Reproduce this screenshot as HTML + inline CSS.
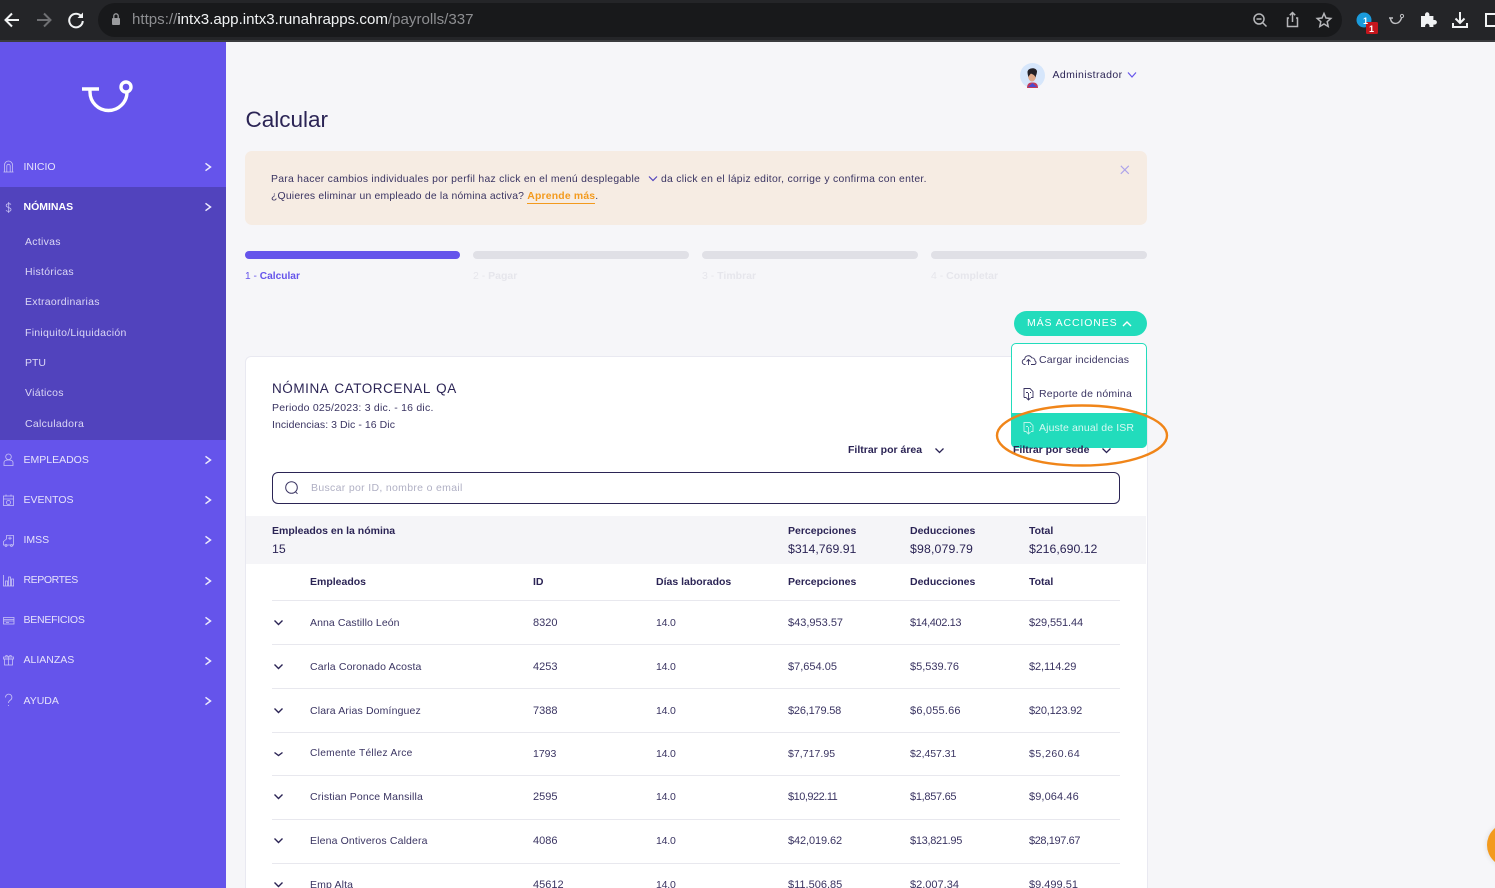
<!DOCTYPE html>
<html lang="es"><head><meta charset="utf-8"><title>Calcular</title>
<style>
html,body{margin:0;padding:0;width:1495px;height:888px;overflow:hidden;background:#f6f6f9;font-family:"Liberation Sans",sans-serif;color:#2b2455}
#r{position:absolute;left:0;top:0;width:1495px;height:888px;overflow:hidden;background:#f6f6f9}
.a{position:absolute}
.t{position:absolute;white-space:nowrap;line-height:14px;font-size:11px;color:#3a3462;margin-top:1px}
.z{margin-top:0}
.n{color:#e6e3fb;font-size:10.5px}
.s{color:#dcd8f6;font-size:10.5px;letter-spacing:.28px}
.b{font-weight:bold;color:#2b2455;font-size:10.5px}
.m{font-size:12.300px;color:#2b2455}
.c{font-size:10.500px;letter-spacing:.14px}
.d{font-size:10.500px;letter-spacing:-.2px}
.l{position:absolute;left:272px;width:848px;height:1px;background:#e8e8ee}
svg{position:absolute;overflow:visible}
</style></head><body><div id="r">

<!-- browser bar -->
<div class="a" style="left:0;top:0;width:1495px;height:41px;background:#242528"></div>
<div class="a" style="left:0;top:40px;width:1495px;height:2px;background:#3a3b3e"></div>
<div class="a" style="left:98px;top:3px;width:1244px;height:34px;border-radius:17px;background:#18191b"></div>
<svg style="left:0;top:0" width="1495" height="41" fill="none" stroke-width="2">
<path d="M19 20H6M12 13.500L5.500 20 12 26.500" stroke="#f1f3f4"/>
<path d="M37 20h13M44 13.500l6.500 6.500-6.500 6.500" stroke="#6f7073"/>
<path d="M81.500 16.500A6.800 6.800 0 1 0 82.800 21" stroke="#f1f3f4"/><path d="M83 12.500v5.500h-5.500z" fill="#f1f3f4"/>
<rect x="112" y="18" width="8" height="7" rx="1" fill="#9a9b9e"/><path d="M113.800 18v-2a2.200 2.200 0 0 1 4.400 0v2" stroke="#9a9b9e" stroke-width="1.300"/>
<g stroke="#b6b7ba" stroke-width="1.500"><circle cx="1259" cy="19" r="5"/><path d="M1263 23l3.500 3.500M1256.500 19h5"/>
<path d="M1289 18h-1.500v8.500h10V18H1296M1292.500 22v-9M1289.800 15.200l2.700-2.700 2.700 2.700"/>
<path d="M1324 13.500l2 4.500 4.800.500-3.600 3.200 1 4.800-4.200-2.500-4.200 2.500 1-4.800-3.600-3.200 4.800-.500z"/></g>
<circle cx="1364" cy="20" r="7.500" fill="#1a9bdc"/><rect x="1366" y="22" width="12" height="12" rx="1.500" fill="#c5161d"/>
<path d="M1389 18l4 0M1390.500 18c0 7 9 7.500 11 0" stroke="#bfc0c3" stroke-width="1.400"/><circle cx="1402" cy="16" r="1.600" stroke="#bfc0c3" stroke-width="1"/>
<path d="M1421 16h4v-1.500a2.200 2.200 0 0 1 4.400 0V16h4v4h1.200a2.300 2.300 0 0 1 0 4.600H1433.400V27H1429.500v-1a2.200 2.200 0 0 0-4.400 0v1H1421z" fill="#f1f3f4"/>
<path d="M1460 12v11M1455.500 18.500l4.500 4.500 4.500-4.500M1453 23v4h14v-4" stroke="#f1f3f4"/>
<rect x="1486" y="14" width="12" height="12" stroke="#f1f3f4"/>
</svg>
<div class="t z" style="left:132px;top:12px;line-height:16px;font-size:15.100px;color:#f1f3f4"><span style="color:#8d8e91">https://</span>intx3.app.intx3.runahrapps.com<span style="color:#8d8e91">/payrolls/337</span></div>
<div class="t z" style="left:1363px;top:14px;font-size:9px;font-weight:bold;color:#fff">1</div>
<div class="t z" style="left:1369px;top:22px;font-size:9px;font-weight:bold;color:#fff">1</div>

<!-- sidebar -->
<div class="a" style="left:0;top:42px;width:226px;height:846px;background:#6554eb"></div>
<div class="a" style="left:0;top:187px;width:226px;height:253px;background:#5143bd"></div>
<svg style="left:0;top:42px" width="226" height="846" fill="none" stroke="#fff">
<path d="M82 47h17M90 47v3a18.500 18.500 0 0 0 37 0" stroke-width="3.400"/><circle cx="126" cy="45" r="5" stroke-width="3.400"/>
<g stroke="#c9c3f5" stroke-width=".8">
<path d="M3.500 130h10M4.500 130v-7a4 4 0 0 1 8 0v7M6.800 130v-6a1.700 1.700 0 0 1 3.400 0v6"/>
<path d="M11 162.500c-.8-1.200-4.800-1.200-4.800 1 0 2.500 4.800 1.500 4.800 4 0 2.300-4 2.300-5 .8M8.700 160v11"/>
<circle cx="8.500" cy="414.800" r="2.800"/><path d="M4 423.500v-3c0-2 2-2.500 4.500-2.500s4.500.5 4.500 2.500v3z"/>
<rect x="3.500" y="454" width="10" height="9.500"/><path d="M3.500 457h10M6 452.500v2M11 452.500v2"/><circle cx="8.500" cy="460.500" r="2"/>
<path d="M3.500 503v-3.500l3-2.500v-3.500h7V503zM10 494.500v3.500M8.200 496.200h3.600"/><circle cx="6" cy="503.500" r="1"/><circle cx="11.500" cy="503.500" r="1"/>
<path d="M3.500 533v11h10.500M5.500 544v-5h2v5zM8.500 544v-9h2v9zM11.500 544v-7h2v7z"/>
<rect x="3.500" y="575.500" width="10.500" height="6.500"/><path d="M3.500 577.500h10.500M3.500 579h10.500M6 580.500h3"/>
<rect x="4.500" y="617" width="8" height="6"/><path d="M3.500 615h10v2h-10zM8.500 615v8M8.500 615c-2-3-4-1-2 0M8.500 615c2-3 4-1 2 0"/>
<path d="M5.500 655.500a3.200 3.200 0 1 1 5 2.500c-1.500 1-2 1.500-2 3M8.500 663v1"/>
</g>
<g stroke="#eceafd" stroke-width="1.500">
<path d="M205.500 121.300l5 3.700-5 3.700M205.500 161.300l5 3.700-5 3.700M205.500 414.300l5 3.700-5 3.700M205.500 454.300l5 3.700-5 3.700M205.500 494.300l5 3.700-5 3.700M205.500 535.300l5 3.700-5 3.700M205.500 575.300l5 3.700-5 3.700M205.500 615.300l5 3.700-5 3.700M205.500 655.300l5 3.700-5 3.700"/>
</g></svg>
<div class="t n" style="left:23.500px;top:159px">INICIO</div>
<div class="t n" style="left:23.500px;top:199px;font-weight:bold;color:#fff">NÓMINAS</div>
<div class="t s" style="left:25px;top:234px">Activas</div>
<div class="t s" style="left:25px;top:264px">Históricas</div>
<div class="t s" style="left:25px;top:294px">Extraordinarias</div>
<div class="t s" style="left:25px;top:325px">Finiquito/Liquidación</div>
<div class="t s" style="left:25px;top:355px;letter-spacing:0">PTU</div>
<div class="t s" style="left:25px;top:385px">Viáticos</div>
<div class="t s" style="left:25px;top:416px">Calculadora</div>
<div class="t n" style="left:23.500px;top:452px">EMPLEADOS</div>
<div class="t n" style="left:23.500px;top:492px">EVENTOS</div>
<div class="t n" style="left:23.500px;top:532px">IMSS</div>
<div class="t n" style="left:23.500px;top:572px;letter-spacing:-.4px">REPORTES</div>
<div class="t n" style="left:23.500px;top:612px;letter-spacing:-.25px">BENEFICIOS</div>
<div class="t n" style="left:23.500px;top:652px">ALIANZAS</div>
<div class="t n" style="left:23.500px;top:693px">AYUDA</div>

<!-- header -->
<svg style="left:1020px;top:63px" width="26" height="26"><circle cx="12.500" cy="12.500" r="12.500" fill="#d6e6fb"/><path d="M7 25c0-5 3-5.500 5.500-5.500s5.500.500 5.500 5.500z" fill="#c23a5a"/><path d="M8 24l4.500-4 4.500 4z" fill="#4a4ad0"/><ellipse cx="12" cy="12.500" rx="4" ry="6" fill="#dfa98a"/><path d="M7.500 9c0-4 8-5.500 9.500-1 0 3-1 4-1.500 6.500-1-3-3-3-4.500-4-1 1-2 2-2.500 3.500-.500-1.500-1-3-1-5z" fill="#232027"/></svg>
<div class="t" style="left:1052.500px;top:67px;font-size:10.500px;letter-spacing:.4px;color:#2b2455">Administrador</div>
<svg style="left:1127px;top:71px" width="10" height="8" fill="none"><path d="M1 1.500l4 4.500 4-4.500" stroke="#6554eb" stroke-width="1.200"/></svg>
<div class="t z" style="left:245.500px;top:106px;line-height:28px;font-size:22.500px;color:#2b2455">Calcular</div>

<!-- banner -->
<div class="a" style="left:245px;top:151px;width:902px;height:74px;border-radius:7px;background:#f6ece3"></div>
<div class="t" style="left:271px;top:172px;font-size:10.400px;letter-spacing:.27px">Para hacer cambios individuales por perfil haz click en el menú desplegable</div>
<svg style="left:648px;top:175px" width="10" height="8" fill="none"><path d="M1 1.500l4 4 4-4" stroke="#5143bd" stroke-width="1.200"/></svg>
<div class="t" style="left:661px;top:172px;font-size:10.400px;letter-spacing:.28px">da click en el lápiz editor, corrige y confirma con enter.</div>
<div class="t" style="left:271px;top:189px;font-size:10.400px;letter-spacing:.2px">¿Quieres eliminar un empleado de la nómina activa? <span style="color:#f39a1d;font-weight:bold;border-bottom:1px solid #f39a1d;padding-bottom:1px;letter-spacing:.2px">Aprende más</span>.</div>
<svg style="left:1120px;top:165px" width="10" height="10" fill="none"><path d="M.8.800l8 8M8.800.800l-8 8" stroke="#ada3ea" stroke-width="1.100"/></svg>

<!-- stepper -->
<div class="a" style="left:245px;top:251px;width:215px;height:8px;border-radius:4px;background:#6554eb"></div>
<div class="a" style="left:473px;top:251px;width:216px;height:8px;border-radius:4px;background:#e0e0e6"></div>
<div class="a" style="left:702px;top:251px;width:216px;height:8px;border-radius:4px;background:#e0e0e6"></div>
<div class="a" style="left:931px;top:251px;width:216px;height:8px;border-radius:4px;background:#e0e0e6"></div>
<div class="t" style="left:245px;top:269px;font-size:10.200px;color:#6554eb">1 - <b>Calcular</b></div>
<div class="t" style="left:473px;top:268px;font-size:10.500px;color:#e6e6ec">2 - <b>Pagar</b></div>
<div class="t" style="left:702px;top:268px;font-size:10.500px;color:#e6e6ec">3 - <b>Timbrar</b></div>
<div class="t" style="left:931px;top:268px;font-size:10.500px;color:#e6e6ec">4 - <b>Completar</b></div>

<!-- card -->
<div class="a" style="left:245px;top:356px;width:901px;height:560px;background:#fff;border:1px solid #e9e9f1;border-radius:6px"></div>
<div class="t" style="left:272px;top:381px;font-size:13.500px;letter-spacing:.55px;color:#2b2455;word-spacing:1.500px">NÓMINA CATORCENAL QA</div>
<div class="t" style="left:272px;top:400px;font-size:10.500px;letter-spacing:.22px">Periodo 025/2023: 3 dic. - 16 dic.</div>
<div class="t" style="left:272px;top:417px;font-size:10.500px;letter-spacing:.06px">Incidencias: 3 Dic - 16 Dic</div>
<div class="t b" style="left:848px;top:442px">Filtrar por área</div>
<svg style="left:934px;top:447px" width="11" height="8" fill="none"><path d="M1.500 1.500l4 4 4-4" stroke="#2b2455" stroke-width="1.300"/></svg>
<div class="a" style="left:272px;top:472px;width:846px;height:30px;border:1.300px solid #2b2455;border-radius:6px;background:#fff"></div>
<svg style="left:284px;top:480px" width="16" height="16" fill="none" stroke="#3a3462" stroke-width="1"><circle cx="7.500" cy="7.500" r="5.800"/><path d="M11.500 11.800l2 2"/></svg>
<div class="t" style="left:311px;top:480px;font-size:10.500px;letter-spacing:.32px;color:#b0b0c4">Buscar por ID, nombre o email</div>

<div class="a" style="left:246px;top:516px;width:900px;height:48px;background:#f5f5f8"></div>
<div class="t b" style="left:272px;top:523px">Empleados en la nómina</div><div class="t m" style="left:272px;top:541px">15</div>
<div class="t b" style="left:788px;top:523px">Percepciones</div><div class="t m" style="left:788px;top:541px">$314,769.91</div>
<div class="t b" style="left:910px;top:523px">Deducciones</div><div class="t m" style="left:910px;top:541px;letter-spacing:.15px">$98,079.79</div>
<div class="t b" style="left:1029px;top:523px">Total</div><div class="t m" style="left:1029px;top:541px">$216,690.12</div>

<div class="t b" style="left:310px;top:574px">Empleados</div>
<div class="t b" style="left:533px;top:574px">ID</div>
<div class="t b" style="left:656px;top:574px">Días laborados</div>
<div class="t b" style="left:788px;top:574px">Percepciones</div>
<div class="t b" style="left:910px;top:574px">Deducciones</div>
<div class="t b" style="left:1029px;top:574px">Total</div>
<div class="l" style="top:600px"></div><div class="l" style="top:644px"></div><div class="l" style="top:688px"></div><div class="l" style="top:732px"></div><div class="l" style="top:775px"></div><div class="l" style="top:819px"></div><div class="l" style="top:863px"></div>

<svg style="left:273px;top:601px" width="12" height="288" fill="none" stroke="#2b2455" stroke-width="1.400">
<path d="M1.500 19.500l4 4 4-4M1.500 63.500l4 4 4-4M1.500 107.500l4 4 4-4M1.500 151.500l4 3 4-3M1.500 193.500l4 4 4-4M1.500 237.500l4 4 4-4M1.500 281.500l4 4 4-4"/></svg>

<div class="t c" style="left:310px;top:615px;letter-spacing:.08px">Anna Castillo León</div><div class="t" style="left:533px;top:615px">8320</div><div class="t d" style="left:656px;top:615px">14.0</div><div class="t" style="left:788px;top:615px">$43,953.57</div><div class="t" style="left:910px;top:615px;letter-spacing:-.4px">$14,402.13</div><div class="t" style="left:1029px;top:615px;letter-spacing:-.1px">$29,551.44</div>
<div class="t c" style="left:310px;top:659px">Carla Coronado Acosta</div><div class="t" style="left:533px;top:659px">4253</div><div class="t d" style="left:656px;top:659px">14.0</div><div class="t" style="left:788px;top:659px">$7,654.05</div><div class="t" style="left:910px;top:659px">$5,539.76</div><div class="t" style="left:1029px;top:659px;letter-spacing:-.1px">$2,114.29</div>
<div class="t c" style="left:310px;top:703px">Clara Arias Domínguez</div><div class="t" style="left:533px;top:703px">7388</div><div class="t d" style="left:656px;top:703px">14.0</div><div class="t" style="left:788px;top:703px;letter-spacing:-.2px">$26,179.58</div><div class="t" style="left:910px;top:703px;letter-spacing:.2px">$6,055.66</div><div class="t" style="left:1029px;top:703px;letter-spacing:-.2px">$20,123.92</div>
<div class="t" style="left:310px;top:746px;font-size:10.200px;letter-spacing:.3px">Clemente Téllez Arce</div><div class="t" style="left:533px;top:746px;font-size:10.500px">1793</div><div class="t d" style="left:656px;top:746px">14.0</div><div class="t" style="left:788px;top:746px;font-size:10.500px;letter-spacing:.05px">$7,717.95</div><div class="t" style="left:910px;top:746px;font-size:10.500px;letter-spacing:-.05px">$2,457.31</div><div class="t" style="left:1029px;top:746px;font-size:10.500px;letter-spacing:.5px">$5,260.64</div>
<div class="t c" style="left:310px;top:789px">Cristian Ponce Mansilla</div><div class="t" style="left:533px;top:789px">2595</div><div class="t d" style="left:656px;top:789px">14.0</div><div class="t" style="left:788px;top:789px;letter-spacing:-.5px">$10,922.11</div><div class="t" style="left:910px;top:789px;letter-spacing:-.3px">$1,857.65</div><div class="t" style="left:1029px;top:789px;letter-spacing:.1px">$9,064.46</div>
<div class="t c" style="left:310px;top:833px">Elena Ontiveros Caldera</div><div class="t" style="left:533px;top:833px">4086</div><div class="t d" style="left:656px;top:833px">14.0</div><div class="t" style="left:788px;top:833px;letter-spacing:-.1px">$42,019.62</div><div class="t" style="left:910px;top:833px;letter-spacing:-.3px">$13,821.95</div><div class="t" style="left:1029px;top:833px;letter-spacing:-.4px">$28,197.67</div>
<div class="t c" style="left:310px;top:877px">Emp Alta</div><div class="t" style="left:533px;top:877px">45612</div><div class="t d" style="left:656px;top:877px">14.0</div><div class="t" style="left:788px;top:877px">$11,506.85</div><div class="t" style="left:910px;top:877px">$2,007.34</div><div class="t" style="left:1029px;top:877px">$9,499.51</div>

<!-- actions -->
<div class="a" style="left:1014px;top:311px;width:133px;height:25px;border-radius:12.500px;background:#22dcbc"></div>
<div class="t z" style="left:1027px;top:315.500px;font-size:10.500px;letter-spacing:.88px;color:#fff">MÁS ACCIONES</div>
<svg style="left:1122px;top:320px" width="10" height="8" fill="none"><path d="M1 6l4-4 4 4" stroke="#fff" stroke-width="1.400"/></svg>
<div class="a" style="left:1011px;top:343px;width:134px;height:102px;border:1px solid #22dcbc;border-radius:5px;background:#fff"></div>
<div class="a" style="left:1011px;top:413px;width:136px;height:35px;border-radius:0 0 5px 5px;background:#22dcbc"></div>
<div class="t" style="left:1039px;top:352px;font-size:10.500px;letter-spacing:.18px">Cargar incidencias</div>
<div class="t" style="left:1039px;top:386px;font-size:10.500px;letter-spacing:.22px">Reporte de nómina</div>
<div class="t" style="left:1039px;top:420px;font-size:10.500px;letter-spacing:.12px;color:#d6f9f2">Ajuste anual de ISR</div>
<svg style="left:1020px;top:350px" width="20" height="90" fill="none" stroke-width=".9">
<path d="M5.500 14.500H5a2.600 2.600 0 0 1-.3-5.200 3.700 3.700 0 0 1 7-1.500 3 3 0 0 1 3.300 3 2 2 0 0 1-.5 3.700h-3.500M8.500 15V9.500M6.500 11.500l2-2 2 2" stroke="#3a3462"/>
<path d="M4 47.500v-9h6l3 3v6h-2M4 47.500h2.500M8.500 43v7M6.500 48l2 2 2-2M6 42.500h2M10 42.500h1" stroke="#3a3462"/>
<path d="M4 81.500v-9h6l3 3v6h-2M4 81.500h2.500M8.500 77v7M6.500 82l2 2 2-2M6 76.500h2M10 76.500h1" stroke="#bdf4e9"/></svg>
<div class="t b" style="left:1013px;top:442px">Filtrar por sede</div>
<svg style="left:1101px;top:447px" width="11" height="8" fill="none"><path d="M1.500 1.500l4 4 4-4" stroke="#2b2455" stroke-width="1.300"/></svg>
<svg style="left:995px;top:403px" width="175" height="66" fill="none"><ellipse cx="87" cy="32.500" rx="85" ry="30" stroke="#f08519" stroke-width="2.400"/></svg>

<div class="a" style="left:1487px;top:823px;width:44px;height:44px;border-radius:50%;background:#f39a1d;box-shadow:0 0 6px rgba(0,0,0,.12)"></div>
</div></body></html>
